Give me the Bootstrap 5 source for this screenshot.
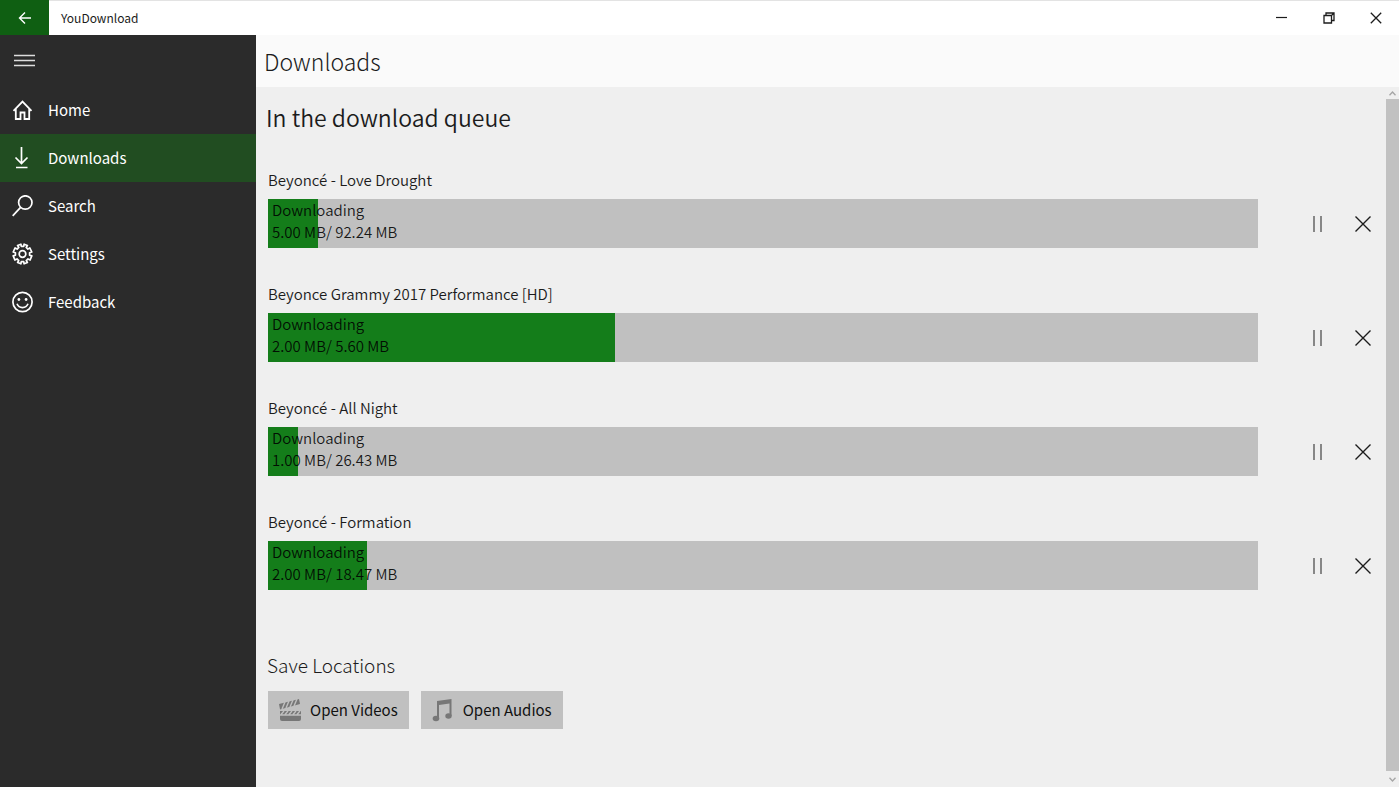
<!DOCTYPE html>
<html lang="en">
<head>
<meta charset="utf-8">
<meta name="viewport" content="width=device-width, initial-scale=1">
<title>YouDownload</title>
<link href="https://cdn.jsdelivr.net/npm/bootstrap@5.3.0/dist/css/bootstrap.min.css" rel="stylesheet">
<style>
body { font-family: "Noto Sans CJK SC", "Open Sans", sans-serif; font-size: 15px; line-height: 22px; color: #1c1c1c; background: #efefef; }
svg { display: block; fill: none; stroke: currentColor; }
button { border: 0; background: transparent; padding: 0; color: inherit; }
.titlebar { height: 35px; background: #fff; border-top: 1px solid #e3e3e3; padding-bottom: 1px; }
.back-btn { width: 49px; background: #0f5f12; color: #fff; margin: -1px 0; }
.app-name { font-size: 12px; padding-left: 12px; }
.win-btn { width: 47px; }
.side { width: 256px; background: #2b2b2b; color: #fff; }
.menu-btn { height: 51px; width: 49px; color: #ddd; }
.side a { height: 48px; padding-left: 12px; gap: 15px; color: #fff; text-decoration: none; }
.side a.current { background: #214d21; }
.page-head { height: 52px; background: #fafafa; padding-left: 8px; }
.page-head h1 { font-size: 23px; line-height: 36px; font-weight: 300; margin: 0; }
.content-area { padding: 12px 0 12px 12px; }
.content-area h2 { font-size: 23px; line-height: 36px; font-weight: 350; margin: 0 0 33px -2px; }
.content-area h3 { font-size: 19px; line-height: 28px; font-weight: 300; margin: 27px 0 12px -1px; }
.job { height: 114px; }
.job-name { font-weight: 350; line-height: 24px; margin-bottom: 7px; }
.job-bar { margin-right: 36px; }
.progress { height: 49px; border-radius: 0; background: #c0c0c0; }
.progress-bar { background: #147d1a; }
.job-state { left: 4px; top: 0; font-weight: 350; color: rgba(0,0,0,.88); }
.job-btn { width: 46px; height: 49px; }
.pause-btn { color: #666; }
.folder-btn { height: 38px; background: #c0c0c0; padding: 0 11px 0 10px; gap: 8px; color: #111; }
.folder-btn svg { stroke: none; }
.scroll-track { width: 13px; background: #efefef; color: #a5a5a5; }
.scroll-thumb { background: #c1c1c1; }
.scroll-cap { height: 12px; }
.scroll-cap-end { height: 16px; }
</style>
</head>
<body>
<div class="d-flex flex-column min-vh-100">
  <header class="titlebar d-flex align-items-stretch flex-shrink-0">
    <button class="back-btn d-flex align-items-center justify-content-center" aria-label="Back">
      <svg width="14" height="14" viewBox="0 0 14 14" stroke-width="1.4"><path d="M13 7H1.5M7 1.5 1.5 7 7 12.500"/></svg>
    </button>
    <span class="app-name align-self-center flex-grow-1">YouDownload</span>
    <button class="win-btn d-flex align-items-center justify-content-center" aria-label="Minimize">
      <svg width="11" height="11" viewBox="0 0 11 11"><path d="M0 5.500H11" stroke-width="1.200"/></svg>
    </button>
    <button class="win-btn d-flex align-items-center justify-content-center" aria-label="Restore">
      <svg width="12" height="12" viewBox="0 0 12 12" stroke-width="1.300"><path d="M1 3.500H8.500V11H1ZM3 3.500V1H11V8.500H8.500M8.500 3.500 11 1"/></svg>
    </button>
    <button class="win-btn d-flex align-items-center justify-content-center" aria-label="Close">
      <svg width="12" height="12" viewBox="0 0 12 12" stroke-width="1.300"><path d="M.8.8 11.200 11.200M11.200.8.8 11.200"/></svg>
    </button>
  </header>

  <div class="d-flex flex-grow-1">
    <nav class="side flex-shrink-0 d-flex flex-column" aria-label="Main">
      <button class="menu-btn d-flex align-items-center justify-content-center" aria-label="Menu">
        <svg width="21" height="13" viewBox="0 0 21 13" stroke-width="1.500"><path d="M0 1.500H21M0 6.500H21M0 11.500H21"/></svg>
      </button>
      <a href="#" class="d-flex align-items-center">
        <svg width="21" height="22" viewBox="0 0 21 22" stroke-width="1.800"><path d="M1.500 11.800 10.500 2.600 19.500 11.800M3.800 10V20H8.500V13.500H12.500V20H17.200V10"/></svg>
        Home</a>
      <a href="#" class="d-flex align-items-center current" aria-current="page">
        <svg width="21" height="22" viewBox="0 0 21 22" stroke-width="1.700"><path d="M9.500 0V16.500M3.500 10.500 9.500 16.500 15.500 10.500M4 20.500H15.500"/></svg>
        Downloads</a>
      <a href="#" class="d-flex align-items-center">
        <svg width="21" height="22" viewBox="0 0 21 22" stroke-width="1.700"><circle cx="13.300" cy="7.500" r="6.700"/><path d="M8.600 12.300.7 20.800"/></svg>
        Search</a>
      <a href="#" class="d-flex align-items-center">
        <svg width="21" height="22" viewBox="0 0 21 22" stroke-width="1.700" stroke-linejoin="round"><circle cx="10.500" cy="11" r="3.300"/><path d="M8.900 1.200 9.300 3.400 11.700 3.400 12.100 1.200 15.400 2.500 14.200 4.400 15.900 6.100 17.800 4.900 19.800 9 17.600 9.700V12.200L19.800 12.900 18.100 17 16 15.900 14.300 17.600 15.400 19.500 12.100 20.800 11.700 18.600H9.300L8.900 20.800 5.600 19.500 6.700 17.600 5 15.900 2.900 17 1.200 12.900 3.400 12.200V9.700L1.200 9 3.100 4.900 5.100 6.100 6.800 4.400 5.600 2.500Z"/></svg>
        Settings</a>
      <a href="#" class="d-flex align-items-center">
        <svg width="21" height="22" viewBox="0 0 21 22" stroke-width="1.700"><circle cx="10.500" cy="11" r="9.600"/><path d="M5 12.800C7 17.800 14 17.800 16 12.800"/><g fill="currentColor" stroke="none"><circle cx="6.900" cy="8.500" r="1.400"/><circle cx="14.100" cy="8.500" r="1.400"/></g></svg>
        Feedback</a>
    </nav>

    <div class="flex-grow-1 d-flex flex-column">
      <div class="page-head d-flex align-items-center flex-shrink-0"><h1>Downloads</h1></div>
      <div class="d-flex flex-grow-1">
        <main class="content-area flex-grow-1">
          <h2>In the download queue</h2>

          <section class="job">
            <div class="job-name">Beyoncé - Love Drought</div>
            <div class="d-flex">
              <div class="job-bar position-relative flex-grow-1">
                <div class="progress" role="progressbar" aria-label="Beyoncé - Love Drought" aria-valuenow="5" aria-valuemin="0" aria-valuemax="100"><div class="progress-bar" style="width:5%"></div></div>
                <div class="job-state position-absolute">Downloading<br>5.00 MB/ 92.24 MB</div>
              </div>
              <button class="job-btn pause-btn d-flex align-items-center justify-content-center" aria-label="Pause"><svg width="10" height="16" viewBox="0 0 10 16" stroke-width="1.500"><path d="M2 0V16M9 0V16"/></svg></button>
              <button class="job-btn d-flex align-items-center justify-content-center" aria-label="Cancel"><svg width="16" height="16" viewBox="0 0 16 16" stroke-width="1.400"><path d="M.5.5 15.500 15.500M15.500.5.5 15.500"/></svg></button>
            </div>
          </section>

          <section class="job">
            <div class="job-name">Beyonce Grammy 2017 Performance [HD]</div>
            <div class="d-flex">
              <div class="job-bar position-relative flex-grow-1">
                <div class="progress" role="progressbar" aria-label="Beyonce Grammy 2017 Performance [HD]" aria-valuenow="35" aria-valuemin="0" aria-valuemax="100"><div class="progress-bar" style="width:35%"></div></div>
                <div class="job-state position-absolute">Downloading<br>2.00 MB/ 5.60 MB</div>
              </div>
              <button class="job-btn pause-btn d-flex align-items-center justify-content-center" aria-label="Pause"><svg width="10" height="16" viewBox="0 0 10 16" stroke-width="1.500"><path d="M2 0V16M9 0V16"/></svg></button>
              <button class="job-btn d-flex align-items-center justify-content-center" aria-label="Cancel"><svg width="16" height="16" viewBox="0 0 16 16" stroke-width="1.400"><path d="M.5.5 15.500 15.500M15.500.5.5 15.500"/></svg></button>
            </div>
          </section>

          <section class="job">
            <div class="job-name">Beyoncé - All Night</div>
            <div class="d-flex">
              <div class="job-bar position-relative flex-grow-1">
                <div class="progress" role="progressbar" aria-label="Beyoncé - All Night" aria-valuenow="3" aria-valuemin="0" aria-valuemax="100"><div class="progress-bar" style="width:3%"></div></div>
                <div class="job-state position-absolute">Downloading<br>1.00 MB/ 26.43 MB</div>
              </div>
              <button class="job-btn pause-btn d-flex align-items-center justify-content-center" aria-label="Pause"><svg width="10" height="16" viewBox="0 0 10 16" stroke-width="1.500"><path d="M2 0V16M9 0V16"/></svg></button>
              <button class="job-btn d-flex align-items-center justify-content-center" aria-label="Cancel"><svg width="16" height="16" viewBox="0 0 16 16" stroke-width="1.400"><path d="M.5.5 15.500 15.500M15.500.5.5 15.500"/></svg></button>
            </div>
          </section>

          <section class="job">
            <div class="job-name">Beyoncé - Formation</div>
            <div class="d-flex">
              <div class="job-bar position-relative flex-grow-1">
                <div class="progress" role="progressbar" aria-label="Beyoncé - Formation" aria-valuenow="10" aria-valuemin="0" aria-valuemax="100"><div class="progress-bar" style="width:10%"></div></div>
                <div class="job-state position-absolute">Downloading<br>2.00 MB/ 18.47 MB</div>
              </div>
              <button class="job-btn pause-btn d-flex align-items-center justify-content-center" aria-label="Pause"><svg width="10" height="16" viewBox="0 0 10 16" stroke-width="1.500"><path d="M2 0V16M9 0V16"/></svg></button>
              <button class="job-btn d-flex align-items-center justify-content-center" aria-label="Cancel"><svg width="16" height="16" viewBox="0 0 16 16" stroke-width="1.400"><path d="M.5.5 15.500 15.500M15.500.5.5 15.500"/></svg></button>
            </div>
          </section>

          <h3>Save Locations</h3>
          <div class="d-flex column-gap">
            <button class="folder-btn d-flex align-items-center me-2">
              <svg width="24" height="24" viewBox="0 0 24 24"><g fill="#777"><path d="M2 13H23V21Q23 23 21 23H4Q2 23 2 21Z"/><path d="M1 6 21 1 22 6 2 11.500Z"/></g><path stroke="#c0c0c0" stroke-width="1.400" d="M4 11 7 4M8 10 11 3M12 9 15 2M16 8 19 1M3 16.500 6 13M7 16.500 10 13M11 16.500 14 13M15 16.500 18 13M19 16.500 22 13M2 17H23"/></svg>
              Open Videos</button>
            <button class="folder-btn d-flex align-items-center ms-1">
              <svg width="24" height="24" viewBox="0 0 24 24"><g fill="#777"><path d="M6 3 20.500 1V18H18.500V5.500L8 7V21H6Z"/><ellipse cx="5" cy="20.500" rx="3.300" ry="2.700"/><ellipse cx="17.500" cy="18" rx="3.200" ry="2.700"/></g></svg>
              Open Audios</button>
          </div>
        </main>
        <div class="scroll-track flex-shrink-0 d-flex flex-column" aria-hidden="true">
          <div class="scroll-cap d-flex align-items-center justify-content-center"><svg width="7" height="5" viewBox="0 0 7 5" stroke-width="1.300"><path d="M.5 4.300 3.500 1 6.500 4.300"/></svg></div>
          <div class="scroll-thumb flex-grow-1"></div>
          <div class="scroll-cap-end d-flex align-items-center justify-content-center"><svg width="7" height="5" viewBox="0 0 7 5" stroke-width="1.300"><path d="M.5.7 3.500 4 6.500.7"/></svg></div>
        </div>
      </div>
    </div>
  </div>
</div>
<script src="https://cdn.jsdelivr.net/npm/bootstrap@5.3.0/dist/js/bootstrap.bundle.min.js"></script>
</body>
</html>
